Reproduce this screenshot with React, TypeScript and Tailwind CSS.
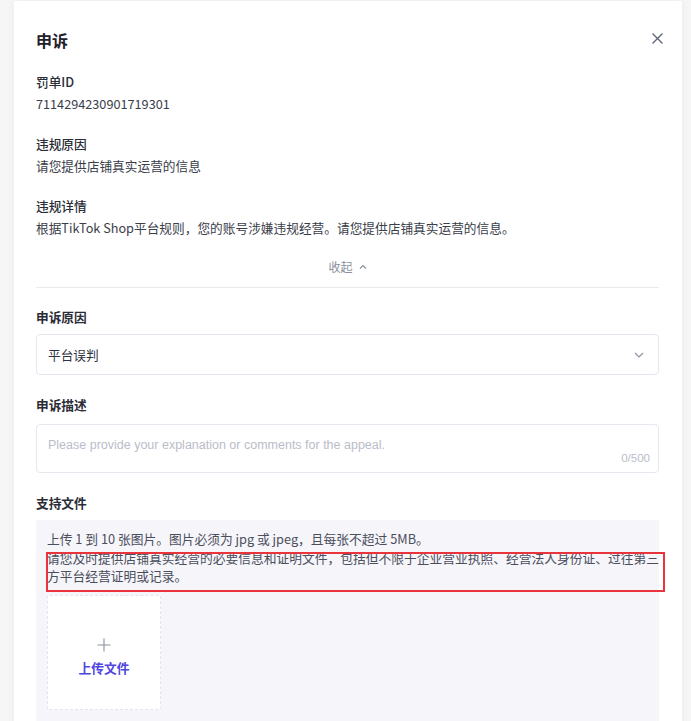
import React from "react";

const font = {
  fontFamily: '"Noto Sans CJK SC", "Noto Sans", sans-serif',
};

function Field({ label, value }: { label: string; value: string }) {
  return (
    <div className="flex flex-col gap-[2px]">
      <div className="text-[12.7px] leading-[20px] font-medium text-[#2a2c36]">{label}</div>
      <div className="text-[12.7px] leading-[20px] text-[#3a3d4a]">{value}</div>
    </div>
  );
}

export default function App() {
  return (
    <div className="min-h-[721px] h-[721px] overflow-hidden bg-[#f6f6f7] pt-[1px]" style={font}>
      <div className="ml-[14px] w-[668px] h-[760px] bg-white shadow-[0_0_8px_rgba(0,0,0,0.06)] pt-[27px] pl-[22px] pr-[23px]">
        {/* header */}
        <div className="flex items-center justify-between h-[24px]">
          <div className="text-[16px] leading-[24px] font-bold text-[#1f2029]">申诉</div>
          <svg width="11" height="11" viewBox="0 0 11 11" className="mr-[-4px] mt-[-3px]">
            <path d="M1 1 L10 10 M10 1 L1 10" stroke="#5f6478" strokeWidth="1.4" strokeLinecap="round" />
          </svg>
        </div>

        <div className="mt-[20px] flex flex-col gap-[20px]">
          <Field label="罚单ID" value="7114294230901719301" />
          <Field label="违规原因" value="请您提供店铺真实运营的信息" />
          <Field label="违规详情" value="根据TikTok Shop平台规则，您的账号涉嫌违规经营。请您提供店铺真实运营的信息。" />
        </div>

        <div className="mt-[19px] flex items-center justify-center gap-[6px] h-[20px] text-[12px] text-[#8b8f9d]">
          <span>收起</span>
          <svg width="8" height="6" viewBox="0 0 8 6">
            <path d="M1 4.5 L4 1.5 L7 4.5" fill="none" stroke="#8b8f9d" strokeWidth="1.1" />
          </svg>
        </div>

        <div className="mt-[10px] border-t border-[#e9e9ee]" />

        <div className="mt-[19px] text-[12.7px] leading-[20px] font-semibold text-[#2a2c36]">申诉原因</div>
        <div className="mt-[7px] h-[41px] rounded-[4px] border border-[#e6e7ef] flex items-center justify-between pl-[11px] pr-[14px]">
          <span className="text-[12.7px] text-[#2f3240]">平台误判</span>
          <svg width="10" height="6" viewBox="0 0 10 6">
            <path d="M1 1 L5 5 L9 1" fill="none" stroke="#8c90a0" strokeWidth="1.1" />
          </svg>
        </div>

        <div className="mt-[20px] text-[12.7px] leading-[20px] font-semibold text-[#2a2c36]">申诉描述</div>
        <div className="mt-[9px] h-[49px] rounded-[4px] border border-[#e6e7ef] pl-[11px] pr-[8px] pt-[10px] relative">
          <div className="text-[12.5px] leading-[20px] text-[#b9bdc9]" style={{ fontFamily: '"Liberation Sans", "Noto Sans CJK SC", sans-serif' }}>
            Please provide your explanation or comments for the appeal.
          </div>
          <div className="absolute right-[8px] bottom-[6px] text-[11.5px] leading-[16px] text-[#b9bdc9]" style={{ fontFamily: '"Liberation Sans", sans-serif' }}>0/500</div>
        </div>

        <div className="mt-[20px] text-[12.7px] leading-[20px] font-semibold text-[#2a2c36]">支持文件</div>
        <div className="mt-[7px] h-[260px] bg-[#f5f5fa] pl-[11px] pt-[10px] relative">
          <div className="text-[12.75px] leading-[18px] text-[#4b4e5c]">
            上传 1 到 10 张图片。图片必须为 jpg 或 jpeg，且每张不超过 5MB。
          </div>
          <div className="mt-[1px] w-[616px] text-[12.75px] leading-[18px] text-[#4b4e5c]">
            请您及时提供店铺真实经营的必要信息和证明文件，包括但不限于企业营业执照、经营法人身份证、过往第三方平台经营证明或记录。
          </div>
          <div className="absolute left-[10px] top-[32px] w-[619px] h-[40px] border-2 border-[#e8343a]" />
          <div className="mt-[10px] w-[114px] h-[115px] pt-[10px] bg-white border border-dashed border-[#e2e3ec] rounded-[3px] flex flex-col items-center justify-center">
            <svg width="14" height="14" viewBox="0 0 14 14">
              <path d="M7 0.5 V13.5 M0.5 7 H13.5" stroke="#8c90a0" strokeWidth="1.1" />
            </svg>
            <div className="mt-[7px] text-[12.75px] leading-[18px] font-semibold text-[#5046df]">上传文件</div>
          </div>
        </div>
      </div>
    </div>
  );
}
